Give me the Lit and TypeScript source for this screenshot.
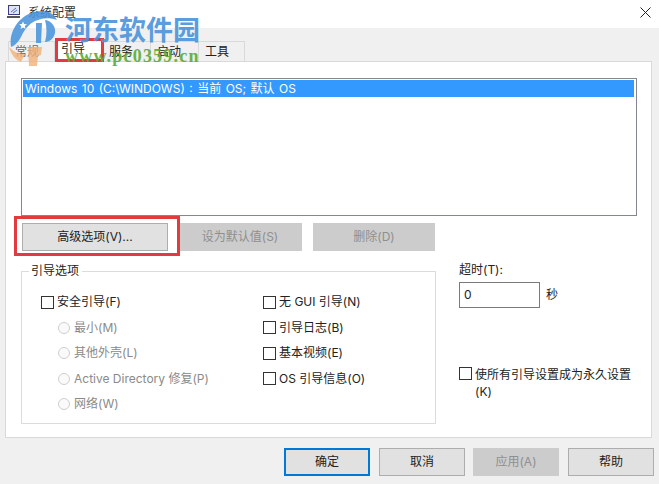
import { LitElement, html, css } from "lit";
import { customElement } from "lit/decorators.js";

@customElement("app-root")
export class AppRoot extends LitElement {
  static styles = css`
    :host { display: block; width: 659px; height: 484px; position: relative; overflow: hidden; background: #f0f0f0; font: 12px/16px Inter, "Noto Sans CJK SC", sans-serif; color: #222; }
    .title { height: 28px; background: #fff; display: flex; align-items: center; padding: 0 8px 0 7px; gap: 3px; }
    .title .name { flex: 1; margin-top: -2px; color: #333; }
    .title svg { display: block; margin-top: -3px; }
    .tabs { display: flex; height: 20px; padding: 13px 0 0 8px; align-items: flex-end; }
    .tab { height: 20px; width: 48px; box-sizing: border-box; border: 1px solid #d9d9d9; border-bottom: 0; border-left: 0; background: #f0f0f0; display: flex; align-items: center; padding-left: 6px; }
    .tab:first-child { border-left: 1px solid #d9d9d9; width: 47px; color: #666; }
    .tab:last-child { width: 46px; }
    .tab.on { background: #fff; height: 23px; margin-bottom: -1px; padding-bottom: 4px; }
    .panel { margin: 0 7px 0 5px; height: 377px; box-sizing: border-box; background: #fff; border: 1px solid #d9d9d9; padding: 16px 14px 0 15px; position: relative; }
    .list { height: 138px; box-sizing: border-box; border: 1px solid #828790; padding: 1px; }
    .sel { height: 17px; background: #3399ff; color: #fff; line-height: 17px; padding-left: 2px; margin-right: 1px; word-spacing: 1.1px; }
    .btnrow { display: flex; margin-top: 7px; padding-left: 1px; gap: 10px; }
    button { font: inherit; color: #222; height: 28px; box-sizing: border-box; border: 1px solid #adadad; background: #e1e1e1; padding: 0; }
    button:disabled { color: #8f8f8f; background: #cccccc; border-color: #cccccc; }
    .b1 { width: 146px; }
    .b2 { width: 124px; }
    .b3 { width: 122px; margin-left: 1px; }
    .lower { display: flex; margin-top: 12px; }
    fieldset { flex: none; min-width: 0; width: 415px; height: 161px; box-sizing: border-box; margin: 0; border: 1px solid #dcdcdc; padding: 0; display: flex; }
    legend { padding: 0 3px 0 2px; margin-left: 7px; line-height: 16px; }
    .col { padding-top: 15px; display: flex; flex-direction: column; }
    .col.l { width: 241px; padding-left: 19px; box-sizing: border-box; }
    .col.r { width: 170px; }
    .row { display: flex; align-items: center; height: 16px; margin-bottom: 9.5px; white-space: nowrap; }
    .box { width: 13px; height: 13px; box-sizing: border-box; border: 1px solid #333; background: #fff; margin-right: 3px; flex: none; }
    .radio { width: 12px; height: 12px; box-sizing: border-box; border: 1px solid #cfcfcf; border-radius: 50%; margin: 0 4px 0 17px; flex: none; background: #fafafa; }
    .dim { color: #8a8a8a; }
    .side { flex: none; margin-left: 23px; width: 190px; display: flex; flex-direction: column; }
    .tlabel { margin-top: -1px; }
    .tline { display: flex; align-items: center; gap: 6px; margin-top: 4px; }
    .input { width: 81px; height: 26px; box-sizing: border-box; border: 1px solid #7a7a7a; padding-left: 4px; line-height: 24px; }
    .perm { display: flex; margin-top: 58px; }
    .perm .box { margin-top: 1px; }
    .perm span { width: 170px; line-height: 17px; }
    .footer { display: flex; justify-content: flex-end; gap: 9px; padding: 10px 5px 0 0; }
    .footer button { width: 86px; }
    .footer button.def { border: 2px solid #0078d7; }
    .footer button:disabled { margin-left: -1px; }
    .mark { position: absolute; border: 3px solid #e13a3f; box-sizing: border-box; pointer-events: none; }
    .m1 { left: 55px; top: 38px; width: 49px; height: 24px; }
    .m2 { left: 14px; top: 216px; width: 166px; height: 40px; }
    .wm { position: absolute; left: 0; top: 0; pointer-events: none; }
    .wmt { position: absolute; left: 65px; top: 12px; font: bold 27px/34px "Noto Sans CJK SC", sans-serif; color: #4a94dc; opacity: .9; white-space: nowrap; }
    .wmu { position: absolute; left: 65px; top: 46px; font: bold 18px/20px "Liberation Serif", serif; color: #5cab35; opacity: .9; white-space: nowrap; letter-spacing: 1.2px; }
  `;

  private check(t: string) {
    return html`<div class="row"><i class="box"></i><span>${t}</span></div>`;
  }
  private radio(t: string) {
    return html`<div class="row dim"><i class="radio"></i><span>${t}</span></div>`;
  }

  render() {
    return html`
      <div class="title">
        <svg width="18" height="16" viewBox="0 0 18 16"><rect x="1.5" y="0.5" width="11" height="9" fill="#dfe3f4" stroke="#3b3a8c"/><path d="M4 7l5-4M6 8l4-3" stroke="#5a6ac0"/><path d="M0 12h13" stroke="#555" stroke-width="2"/></svg>
        <span class="name">系统配置</span>
        <svg width="11" height="11" viewBox="0 0 11 11"><path d="M.5.5l10 10M10.5.5l-10 10" stroke="#222" fill="none"/></svg>
      </div>
      <div class="tabs">
        <div class="tab">常规</div>
        <div class="tab on">引导</div>
        <div class="tab">服务</div>
        <div class="tab">启动</div>
        <div class="tab">工具</div>
      </div>
      <div class="panel">
        <div class="list"><div class="sel">Windows 10 (C:\\WINDOWS) : 当前 OS; 默认 OS</div></div>
        <div class="btnrow">
          <button class="b1">高级选项(V)...</button>
          <button class="b2" disabled>设为默认值(S)</button>
          <button class="b3" disabled>删除(D)</button>
        </div>
        <div class="lower">
          <fieldset>
            <legend>引导选项</legend>
            <div class="col l">
              ${this.check("安全引导(F)")}
              ${this.radio("最小(M)")}
              ${this.radio("其他外壳(L)")}
              ${this.radio("Active Directory 修复(P)")}
              ${this.radio("网络(W)")}
            </div>
            <div class="col r">
              ${this.check("无 GUI 引导(N)")}
              ${this.check("引导日志(B)")}
              ${this.check("基本视频(E)")}
              ${this.check("OS 引导信息(O)")}
            </div>
          </fieldset>
          <div class="side">
            <div class="tlabel">超时(T):</div>
            <div class="tline"><div class="input">0</div><span>秒</span></div>
            <div class="perm"><i class="box"></i><span>使所有引导设置成为永久设置(K)</span></div>
          </div>
        </div>
      </div>
      <div class="footer">
        <button class="def">确定</button>
        <button>取消</button>
        <button disabled>应用(A)</button>
        <button>帮助</button>
      </div>
      <div class="mark m1"></div>
      <div class="mark m2"></div>
      <svg class="wm" width="70" height="70" viewBox="0 0 70 70">
        <g fill="#4a94dc" opacity=".88">
          <path fill-rule="evenodd" d="M11 47C8 30 22 11 42 11c7 0 12 3 15 9-8-3-15-2-22 1-6 3-10 8-13 14-3 6-6 10-11 12zM23 21.5l1.2 2.6 2.8.2-2.2 1.8.7 2.8-2.5-1.5-2.4 1.5.7-2.8-2.2-1.8 2.8-.2z"/>
          <path d="M36 23h6l-1 20h-5z"/>
          <path d="M45 20c7 1 11 7 10 13-1 5-5 9-10 9 2-7 2-15 0-22z"/>
        </g>
        <g fill="#f3b27a" opacity=".8">
          <path d="M9 47c5 5 10 7 16 7l-4 8C15 60 11 54 9 47z"/>
          <path d="M28 47h14l-1 8-3 1-1 10h-8z"/>
        </g>
      </svg>
      <div class="wmt">河东软件园</div>
      <div class="wmu">www.pc0359.cn</div>
    `;
  }
}
